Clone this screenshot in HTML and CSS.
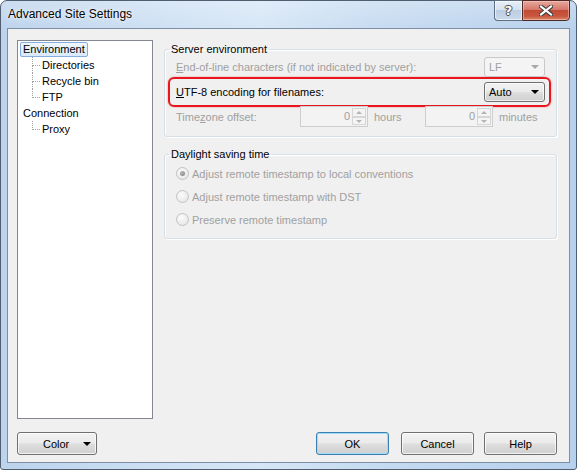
FILE: index.html
```html
<!DOCTYPE html>
<html lang="en">
<head>
    <meta charset="UTF-8">
    <title>Advanced Site Settings</title>
    <link rel="stylesheet" href="styles.css">
</head>
<body>
<div class="window">
    <!-- Barra de título -->
    <div class="titlebar">
        <span class="title">Advanced Site Settings</span>
        <div class="caption-buttons">
            <div class="cap-btn cap-help"><span>?</span></div>
            <div class="cap-btn cap-close">
                <svg width="14" height="11" viewBox="0 0 14 11">
                    <path d="M2 1.5 L12 9.5 M12 1.5 L2 9.5" stroke="#3b3b3b" stroke-width="4.2" stroke-linecap="square"/>
                    <path d="M2 1.5 L12 9.5 M12 1.5 L2 9.5" stroke="#fff" stroke-width="2.2" stroke-linecap="square"/>
                </svg>
            </div>
        </div>
    </div>

    <div class="client">
        <div class="main">
            <!-- Árvore de páginas -->
            <ul class="tree">
                <li class="node-row"><span class="node selected">Environment</span>
                    <ul class="children">
                        <li>Directories</li>
                        <li>Recycle bin</li>
                        <li>FTP</li>
                    </ul>
                </li>
                <li class="node-row"><span class="node">Connection</span>
                    <ul class="children">
                        <li>Proxy</li>
                    </ul>
                </li>
            </ul>

            <div class="pages">
                <fieldset class="group server">
                    <legend>Server environment</legend>
                    <div class="row">
                        <span class="label disabled"><u>E</u>nd-of-line characters (if not indicated by server):</span>
                        <div class="combo combo-disabled">LF<i class="arrow"></i></div>
                    </div>
                    <div class="row highlight">
                        <span class="label"><u>U</u>TF-8 encoding for filenames:</span>
                        <div class="combo">Auto<i class="arrow"></i></div>
                    </div>
                    <div class="row tz-row">
                        <span class="label disabled tz-label">Time<u>z</u>one offset:</span>
                        <div class="spin">
                            <span class="spin-value">0</span>
                            <div class="spin-arrows">
                                <span class="spin-btn up"></span>
                                <span class="spin-btn down"></span>
                            </div>
                        </div>
                        <span class="unit disabled hours">hours</span>
                        <div class="spin">
                            <span class="spin-value">0</span>
                            <div class="spin-arrows">
                                <span class="spin-btn up"></span>
                                <span class="spin-btn down"></span>
                            </div>
                        </div>
                        <span class="unit disabled">minutes</span>
                    </div>
                </fieldset>

                <fieldset class="group dst">
                    <legend>Daylight saving time</legend>
                    <div class="radio-row"><span class="radio checked"></span><span class="disabled">Adjust remote timestamp to local conventions</span></div>
                    <div class="radio-row"><span class="radio"></span><span class="disabled">Adjust remote timestamp with DST</span></div>
                    <div class="radio-row"><span class="radio"></span><span class="disabled">Preserve remote timestamp</span></div>
                </fieldset>
            </div>
        </div>

        <!-- Botões do rodapé -->
        <div class="buttons">
            <button class="btn color-btn">Color<i class="arrow"></i></button>
            <button class="btn default ok-btn">OK</button>
            <button class="btn cancel-btn">Cancel</button>
            <button class="btn">Help</button>
        </div>
    </div>
</div>
</body>
</html>
```

FILE: styles.css
```css
/* Reset básico */
* {
    margin: 0;
    padding: 0;
    box-sizing: border-box;
}

body {
    width: 577px;
    height: 470px;
    overflow: hidden;
    font-family: "Liberation Sans", Arial, sans-serif;
    font-size: 11px;
    color: #000;
    background: #fff;
}

/* Janela */
.window {
    width: 577px;
    height: 470px;
    display: flex;
    flex-direction: column;
    border: 1px solid #4f5e70;
    border-radius: 7px 7px 3px 3px;
    padding: 0 6px 6px 6px;
    background:
        linear-gradient(to bottom, rgba(255, 255, 255, 0.25), rgba(255, 255, 255, 0) 30px),
        linear-gradient(to right, #bcd3ec 0%, #cfe1f4 30%, #d6e6f6 45%, #c6dbf1 65%, #b7d0ec 100%);
}

.titlebar {
    height: 27px;
    display: flex;
    align-items: flex-start;
    padding-left: 1px;
}

.title {
    font-size: 12px;
    line-height: 27px;
    color: #000;
    text-shadow: 0 0 6px rgba(255, 255, 255, 0.9), 0 0 2px rgba(255, 255, 255, 0.9);
    flex: 1;
}

.caption-buttons {
    display: flex;
    margin-top: -1px;
}

.cap-btn {
    height: 21px;
    border: 1px solid #5f6e80;
    display: flex;
    align-items: center;
    justify-content: center;
}

.cap-help {
    width: 28px;
    border-right: none;
    border-radius: 0 0 0 4px;
    background: linear-gradient(to bottom, #e8eff7 0%, #d6e2ef 45%, #bccde0 50%, #c9dbec 100%);
    box-shadow: inset 0 0 0 1px rgba(255, 255, 255, 0.6);
}

.cap-help span {
    font-family: "DejaVu Sans", sans-serif;
    font-weight: bold;
    font-size: 13px;
    color: #fff;
    text-shadow: 1px 0 #4a4a4a, -1px 0 #4a4a4a, 0 1px #4a4a4a, 0 -1px #4a4a4a;
}

.cap-close {
    width: 48px;
    border-radius: 0 0 4px 0;
    border-color: #4d2a26;
    background: linear-gradient(to bottom, #e5a99f 0%, #d7786a 45%, #c24b37 50%, #c9563d 80%, #d88b6e 100%);
    box-shadow: inset 0 0 0 1px rgba(255, 210, 200, 0.5);
}

/* Área interna */
.client {
    flex: 1;
    display: flex;
    flex-direction: column;
    background: #f0f0f0;
    border: 1px solid #7d8fa4;
    padding: 11px 12px 7px 9px;
}

.main {
    flex: 1;
    display: flex;
}

/* Árvore */
.tree {
    list-style: none;
    width: 136px;
    height: 379px;
    background: #fff;
    border: 1px solid #828790;
    padding-left: 1px;
}

.tree li {
    line-height: 16px;
}

.node {
    display: inline-block;
    line-height: 13px;
    margin-left: 1px;
    padding: 0 2px;
    border: 1px solid transparent;
    border-radius: 2px;
}

.node.selected {
    border-color: #84acdd;
    background: linear-gradient(to bottom, #f0f6fd, #d9e9fb);
}

.children {
    list-style: none;
    margin-left: 13px;
}

.children li {
    position: relative;
    padding-left: 10px;
}

.children li::before {
    content: "";
    position: absolute;
    left: 0;
    top: 0;
    width: 7px;
    height: 8px;
    border-left: 1px dotted #a0a0a0;
    border-bottom: 1px dotted #a0a0a0;
}

.children li:not(:last-child)::after {
    content: "";
    position: absolute;
    left: 0;
    top: 8px;
    bottom: 0;
    border-left: 1px dotted #a0a0a0;
}

/* Páginas */
.pages {
    flex: 1;
    margin-left: 11px;
    margin-top: 2px;
}

.group {
    border: 1px solid #d5dfe5;
    border-radius: 3px;
    box-shadow: inset 1px 1px 0 #fff, 1px 1px 0 #fff;
    padding: 1px 5px 9px 3px;
}

.group legend {
    line-height: 14px;
    margin-left: 1px;
    padding: 0 2px;
}

.disabled {
    color: #a0a0a0;
}

.row {
    height: 20px;
    display: flex;
    align-items: center;
    padding: 0 6px 0 8px;
}

.row .label {
    flex: 1;
}

.highlight {
    height: 30px;
    padding: 0 4px 0 6px;
    border: 2px solid #e8161d;
    border-radius: 6px;
    box-shadow: 0 0 2px rgba(232, 22, 29, 0.45);
}

.tz-row {
    height: 21px;
    margin-top: -1px;
}

.row .tz-label {
    flex: none;
    width: 124px;
}

/* Combos */
.combo {
    width: 61px;
    height: 20px;
    display: flex;
    align-items: center;
    padding-left: 4px;
    border: 1px solid #707070;
    border-radius: 3px;
    background: linear-gradient(to bottom, #f2f2f2 0%, #ebebeb 45%, #dddddd 55%, #cfcfcf 100%);
    box-shadow: inset 0 0 0 1px rgba(255, 255, 255, 0.7);
}

.combo .arrow,
.color-btn .arrow {
    margin-left: auto;
    margin-right: 5px;
    width: 0;
    height: 0;
    border-left: 4px solid transparent;
    border-right: 4px solid transparent;
    border-top: 4px solid #000;
}

.combo-disabled {
    color: #a0a0a0;
    border-color: #c9c9c9;
    background: #f4f4f4;
    box-shadow: none;
}

.combo-disabled .arrow {
    border-top-color: #a8a8a8;
}

/* Spin */
.spin {
    width: 68px;
    height: 21px;
    display: flex;
    border: 1px solid #cdcdcd;
    background: #f3f3f3;
    padding: 1px;
}

.spin-value {
    flex: 1;
    text-align: right;
    padding-right: 2px;
    line-height: 17px;
    color: #a0a0a0;
}

.spin-arrows {
    width: 14px;
    display: flex;
    flex-direction: column;
}

.spin-btn {
    flex: 1;
    position: relative;
    border: 1px solid #d6d6d6;
    background: #f4f4f4;
}

.spin-btn::after {
    content: "";
    position: absolute;
    left: 3px;
    top: 2px;
    border-left: 3px solid transparent;
    border-right: 3px solid transparent;
}

.spin-btn.up::after {
    border-bottom: 3px solid #b4b4b4;
}

.spin-btn.down::after {
    border-top: 3px solid #b4b4b4;
}

.unit {
    margin-left: 6px;
}

.hours {
    width: 51px;
}

/* Daylight saving */
.dst {
    margin-top: 10px;
    padding: 1px 5px 7px 3px;
}

.radio-row {
    height: 23px;
    display: flex;
    align-items: center;
    padding-left: 8px;
}

.radio {
    width: 13px;
    height: 13px;
    margin-right: 3px;
    border-radius: 50%;
    border: 1px solid #c2c2c2;
    background: radial-gradient(circle at 40% 35%, #fbfbfb, #e2e2e2);
    display: flex;
    align-items: center;
    justify-content: center;
}

.radio.checked::after {
    content: "";
    width: 5px;
    height: 5px;
    border-radius: 50%;
    background: radial-gradient(circle at 40% 35%, #b8b8b8, #7c7c7c);
}

/* Botões */
.buttons {
    display: flex;
    margin-top: 13px;
}

.btn {
    width: 73px;
    height: 23px;
    font-family: "Liberation Sans", Arial, sans-serif;
    font-size: 11px;
    color: #000;
    border: 1px solid #707070;
    border-radius: 3px;
    background: linear-gradient(to bottom, #f2f2f2 0%, #ebebeb 45%, #dddddd 55%, #cfcfcf 100%);
    box-shadow: inset 0 0 0 1px rgba(255, 255, 255, 0.75);
}

.btn.default {
    border-color: #3c7fb1;
    box-shadow: inset 0 0 0 1px #9fdcf8;
}

.color-btn {
    width: 80px;
    display: flex;
    align-items: center;
    padding-left: 25px;
}

.color-btn .arrow {
    margin-right: 5px;
    border-left-width: 4px;
    border-right-width: 4px;
}

.ok-btn {
    margin-left: auto;
}

.cancel-btn {
    margin: 0 10px 0 12px;
}
```
